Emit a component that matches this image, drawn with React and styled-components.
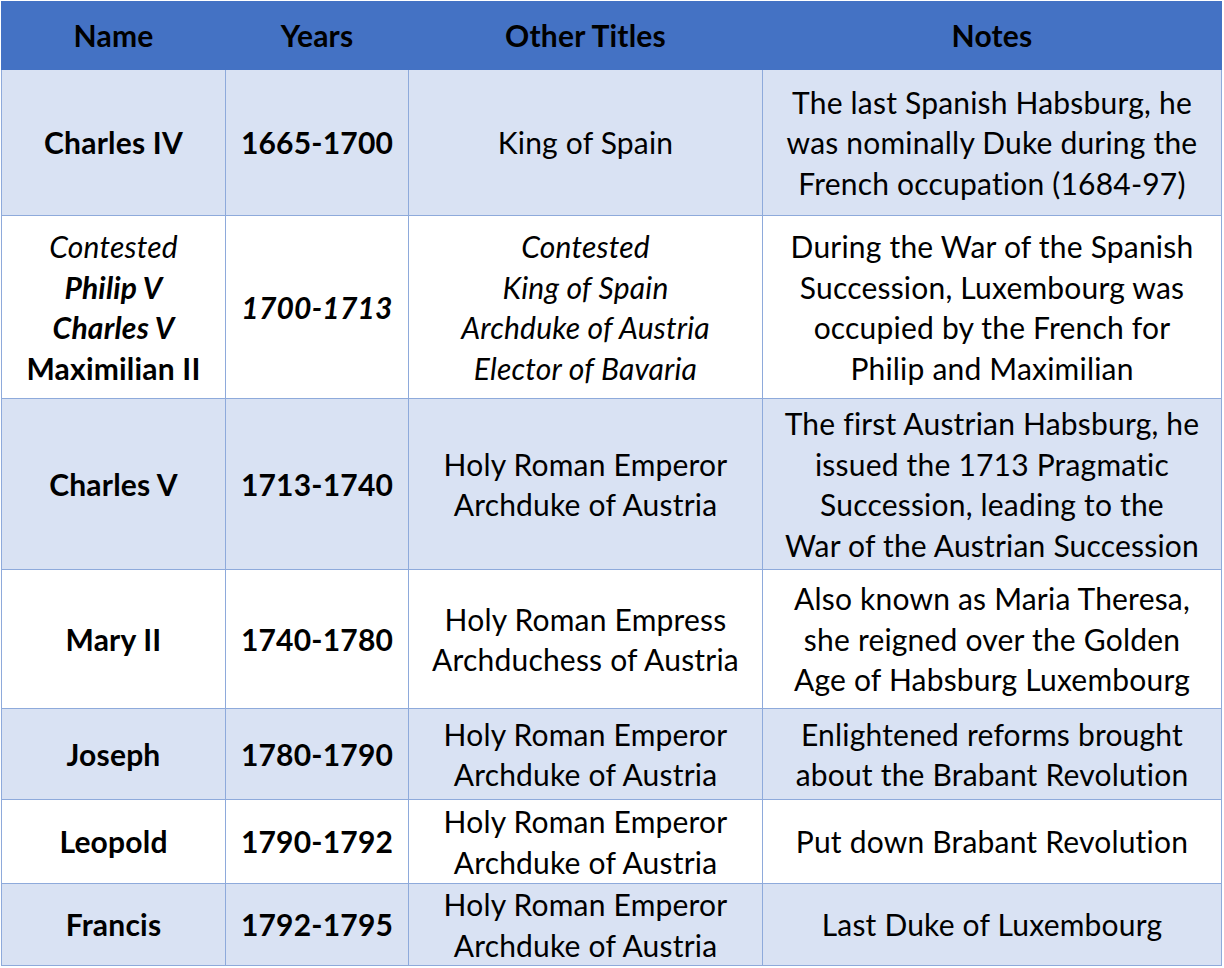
import React from 'react';
import styled, { createGlobalStyle } from 'styled-components';

const GlobalStyle = createGlobalStyle`
  html, body {
    margin: 0;
    padding: 0;
    background: #ffffff;
  }
`;

const Page = styled.div`
  padding: 1px 0 0 1px;
`;

const Table = styled.table`
  width: 1220px;
  border-collapse: collapse;
  table-layout: fixed;
  font-family: Lato, 'Liberation Sans', sans-serif;
  font-size: 30px;
  letter-spacing: 0.2px;
  line-height: 40.5px;
  color: #000000;
`;

const HeadCell = styled.th`
  height: 67px;
  padding: 0;
  background: #4472c4;
  border: 1px solid #4472c4;
  font-weight: 700;
  text-align: center;
  vertical-align: middle;
`;

const Row = styled.tr`
  height: ${(p) => p.h}px;
  background: ${(p) => (p.shaded ? '#d9e2f3' : '#ffffff')};
`;

const Cell = styled.td`
  padding: 0;
  border: 1px solid #8eaadb;
  text-align: center;
  vertical-align: middle;
  white-space: nowrap;
  font-weight: ${(p) => (p.bold ? 700 : 400)};
  font-style: ${(p) => (p.italic ? 'italic' : 'normal')};
`;

const pick = (value, on, off) => {
  if (value === undefined) return 'inherit';
  return value ? on : off;
};

const Line = styled.div`
  font-weight: ${(p) => pick(p.bold, 700, 400)};
  font-style: ${(p) => pick(p.italic, 'italic', 'normal')};
`;

const columns = [
  { title: 'Name', width: 224 },
  { title: 'Years', width: 183 },
  { title: 'Other Titles', width: 354 },
  { title: 'Notes', width: 459 },
];

const emperor = ['Holy Roman Emperor', 'Archduke of Austria'];

const rows = [
  {
    h: 146,
    name: [{ text: 'Charles IV' }],
    years: '1665-1700',
    titles: ['King of Spain'],
    notes: [
      'The last Spanish Habsburg, he',
      'was nominally Duke during the',
      'French occupation (1684-97)',
    ],
  },
  {
    h: 183,
    contested: true,
    name: [
      { text: 'Contested', bold: false, italic: true },
      { text: 'Philip V', bold: true, italic: true },
      { text: 'Charles V', bold: true, italic: true },
      { text: 'Maximilian II', bold: true, italic: false },
    ],
    years: '1700-1713',
    titles: ['Contested', 'King of Spain', 'Archduke of Austria', 'Elector of Bavaria'],
    notes: [
      'During the War of the Spanish',
      'Succession, Luxembourg was',
      'occupied by the French for',
      'Philip and Maximilian',
    ],
  },
  {
    h: 171,
    name: [{ text: 'Charles V' }],
    years: '1713-1740',
    titles: emperor,
    notes: [
      'The first Austrian Habsburg, he',
      'issued the 1713 Pragmatic',
      'Succession, leading to the',
      'War of the Austrian Succession',
    ],
  },
  {
    h: 139,
    name: [{ text: 'Mary II' }],
    years: '1740-1780',
    titles: ['Holy Roman Empress', 'Archduchess of Austria'],
    notes: [
      'Also known as Maria Theresa,',
      'she reigned over the Golden',
      'Age of Habsburg Luxembourg',
    ],
  },
  {
    h: 91,
    name: [{ text: 'Joseph' }],
    years: '1780-1790',
    titles: emperor,
    notes: ['Enlightened reforms brought', 'about the Brabant Revolution'],
  },
  {
    h: 84,
    name: [{ text: 'Leopold' }],
    years: '1790-1792',
    titles: emperor,
    notes: ['Put down Brabant Revolution'],
  },
  {
    h: 82,
    name: [{ text: 'Francis' }],
    years: '1792-1795',
    titles: emperor,
    notes: ['Last Duke of Luxembourg'],
  },
];

const App = () => (
  <Page>
    <GlobalStyle />
    <Table>
      <colgroup>
        {columns.map((col) => (
          <col key={col.title} style={{ width: col.width }} />
        ))}
      </colgroup>
      <thead>
        <tr>
          {columns.map((col) => (
            <HeadCell key={col.title}>{col.title}</HeadCell>
          ))}
        </tr>
      </thead>
      <tbody>
        {rows.map((row, index) => (
          <Row key={row.years} h={row.h} shaded={index % 2 === 0}>
            <Cell bold>
              {row.name.map((part) => (
                <Line key={part.text} bold={part.bold} italic={part.italic}>
                  {part.text}
                </Line>
              ))}
            </Cell>
            <Cell bold italic={row.contested}>
              {row.years}
            </Cell>
            <Cell italic={row.contested}>
              {row.titles.map((t) => (
                <Line key={t}>{t}</Line>
              ))}
            </Cell>
            <Cell>
              {row.notes.map((n) => (
                <Line key={n}>{n}</Line>
              ))}
            </Cell>
          </Row>
        ))}
      </tbody>
    </Table>
  </Page>
);

export default App;
